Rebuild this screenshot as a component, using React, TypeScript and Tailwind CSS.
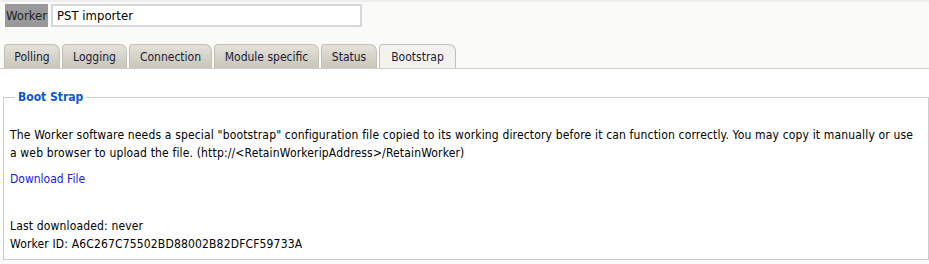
import React from "react";

const tabs = [
  { label: "Polling", w: "w-[56px]" },
  { label: "Logging", w: "w-[65px]" },
  { label: "Connection", w: "w-[83px]" },
  { label: "Module specific", w: "w-[105px]" },
  { label: "Status", w: "w-[56px]" },
  { label: "Bootstrap", w: "w-[77px]", active: true },
];

export default function App() {
  return (
    <div
      className="w-[929px] h-[264px] bg-[#fafaf8] text-[12px] text-black overflow-hidden"
      style={{ fontFamily: "'DejaVu Sans Condensed', 'DejaVu Sans', sans-serif" }}
    >
      <div className="h-[2px] bg-[#ededeb]" />
      {/* worker name */}
      <div className="flex items-center pl-[5px] pt-[2px]">
        <div className="h-[23px] w-[43px] bg-[#999999] flex items-center justify-center text-[13px] text-[#222]">
          Worker
        </div>
        <input
          className="ml-[3px] h-[23px] w-[311px] border-2 border-[#d8d8dc] bg-white px-[4px] text-[13px] text-black outline-none"
          style={{ fontFamily: "inherit" }}
          defaultValue="PST importer"
        />
      </div>

      {/* tabs */}
      <div className="mt-[17px] flex gap-[2px] pl-[4px] border-b border-[#cfcfcc]">
        {tabs.map((t) => (
          <div
            key={t.label}
            className={`${t.w} h-[24px] flex items-center justify-center border border-b-0 border-[#c2c0b6] rounded-tl-[4px] rounded-tr-[7px] text-[12px] text-[#1a1a38] ${
              t.active ? "bg-[#f3f2ee]" : "bg-gradient-to-b from-[#e4e2da] to-[#c8c5b9]"
            }`}
          >
            {t.label}
          </div>
        ))}
      </div>

      {/* panel */}
      <div className="bg-white pt-[19px] pb-[1px] pl-[3px]">
        <fieldset className="border border-[#cccccc] pl-[6px] pr-[9px] pb-[13px] h-[172px]">
          <legend className="ml-[5px] px-[3px] text-[12px] font-bold text-[#0b58d0]">Boot Strap</legend>
          <p className="mt-[20px] leading-[18px] tracking-[0.16px]">
            The Worker software needs a special "bootstrap" configuration file copied to its working directory before it can
            function correctly. You may copy it manually or use a web browser to upload the file.
            (http://&lt;RetainWorkeripAddress&gt;/RetainWorker)
          </p>
          <a href="#" className="block mt-[8px] leading-[18px] text-[#1a1ae0]">
            Download File
          </a>
          <div className="mt-[29px] leading-[18px] tracking-[0.16px]">
            <div>Last downloaded: never</div>
            <div>Worker ID: A6C267C75502BD88002B82DFCF59733A</div>
          </div>
        </fieldset>
      </div>
    </div>
  );
}
